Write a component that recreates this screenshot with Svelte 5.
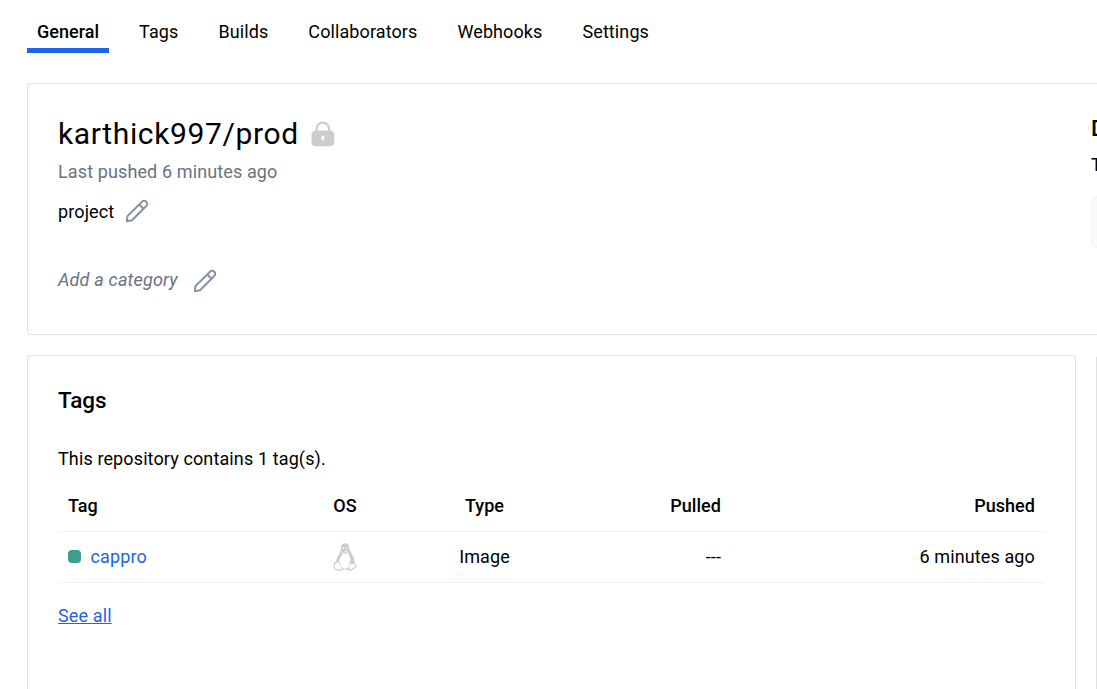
<script>
  const tabs = ['General', 'Tags', 'Builds', 'Collaborators', 'Webhooks', 'Settings'];
</script>

{#snippet pencil()}
  <svg class="pencil" viewBox="0 0 24 24" width="24" height="24" fill="none" stroke="#8993a5" stroke-width="2" stroke-linejoin="round">
    <path d="M1.800 22.200 2.500 17 17 2.700a2.900 2.900 0 0 1 4.300 0 2.900 2.900 0 0 1 0 4.300L7 21.300Z" />
    <path d="M14.200 5.500l4.300 4.300" />
  </svg>
{/snippet}

<div class="page">
  <nav>
    {#each tabs as tab, i}
      <a class="tab" class:active={i === 0}>{tab}</a>
    {/each}
  </nav>

  <section class="card summary">
    <div class="details">
      <div class="title">
        <h1>karthick997/prod</h1>
        <svg class="lock" viewBox="0 0 24 26" width="24" height="26">
          <path d="M5.500 11V8a6.300 6.300 0 0 1 12.600 0v3" fill="none" stroke="#ccc" stroke-width="2.200" />
          <path fill="#ccc" fill-rule="evenodd" d="M5 9.500h13.500Q23.200 9.500 23.200 14v6.500q0 4.800-4.500 4.800H5Q.5 25.300.5 20.500V14Q.5 9.500 5 9.500ZM11.800 14.500q-1.300 0-1.300 1.300v2.400q0 1.300 1.300 1.300t1.300-1.300v-2.400q0-1.300-1.300-1.300Z" />
        </svg>
      </div>
      <div class="last">Last pushed 6 minutes ago</div>
      <div class="desc"><span>project</span>{@render pencil()}</div>
      <div class="category"><em>Add a category</em>{@render pencil()}</div>
    </div>
    <aside>
      <h3>D</h3>
      <div>T</div>
      <div class="command"></div>
    </aside>
  </section>

  <div class="lower">
    <section class="card tags">
      <h2>Tags</h2>
      <p>This repository contains 1 tag(s).</p>
      <div class="row head">
        <span>Tag</span><span class="center">OS</span><span class="center">Type</span><span class="right">Pulled</span><span class="right">Pushed</span>
      </div>
      <div class="row">
        <span class="name"><i></i><a>cappro</a></span>
        <span class="center os">
          <svg viewBox="0 0 24 28" width="24" height="28">
            <path fill="#ccc" d="M8.100 5C8 2 9.500.300 12.200.300S16.300 2.200 16.300 5.400c0 3.600 5 6.800 5 12.600l2.200 4.400-.5 2-4.900 3.300H16l-1.500-1.100H9.700l-1.500 1.100H6l-5.200-1.400V20.300l2.500-2.300C4 12.500 8.300 9.500 8.100 5Z" />
            <path fill="#fff" d="M9.800 9.300l2.400 1.600 2.700-1.800c.600 3 2.700 5 2.700 8.400l-1.300 2.300-.3 4.300c-2.200 2.200-4.900 2.200-6.800.300L6.300 19.200c-.4-4.200 3.100-6.500 3.500-9.900Z" />
            <path fill="#fff" d="M1.800 21.200l2.700-2q.7-.2 1.200.7l3 4.500c.3 1.500-.600 2.600-2.200 2.200l-4.700-1.200ZM17.200 20.200l2 1.200 1.900-1.300 1.300 3-4.300 3.400c-1.300.3-1.900-.3-1.900-1.700Z" />
            <path fill="#fff" d="M9.900 5a.6.9 0 1 0 1.200 0 .6.9 0 1 0-1.200 0ZM13.100 5a.7 1 0 1 0 1.400 0 .7 1 0 1 0-1.400 0ZM10.200 7.600l2 .9 2.200-1.100-.1.800-2.100 1.200Z" />
          </svg>
        </span>
        <span class="center">Image</span><span class="right">---</span><span class="right">6 minutes ago</span>
      </div>
      <a class="all">See all</a>
    </section>
    <section class="card next"></section>
  </div>
</div>

<style>
  :global(body) { margin: 0; background: #fff; overflow: hidden; }
  .page { box-sizing: border-box; width: 1097px; height: 689px; overflow: hidden; padding-left: 27px; font: 18px/24px Roboto, sans-serif; letter-spacing: .12px; color: #000; }
  h1, h2, h3, p { margin: 0; }
  nav { display: flex; gap: 20px; height: 83px; letter-spacing: .1px; }
  .tab { box-sizing: border-box; height: 53px; padding: 20px 10px 0; }
  .active { font-weight: 500; letter-spacing: .02px; border-bottom: 5px solid #1d63ed; }
  .card { box-sizing: border-box; border: 1px solid #e0e0e0; border-radius: 3px; }
  .summary { display: flex; width: 1400px; height: 252px; }
  .details { width: 1033px; padding: 30px 0 0 30px; }
  .title { display: flex; gap: 12px; height: 40px; }
  h1 { font-size: 30px; font-weight: 400; line-height: 40px; letter-spacing: .63px; }
  .lock { margin-top: 7px; }
  .last { margin-top: 6px; color: #677285; }
  .desc { display: flex; gap: 11px; margin-top: 16px; }
  .category { display: flex; gap: 15px; margin-top: 44px; color: #677285; letter-spacing: .19px; }
  .category .pencil { margin-top: 1px; }
  .desc .pencil { margin-top: -1px; }
  aside { padding-top: 32px; }
  h3 { font-size: 22.500px; font-weight: 500; line-height: 24px; margin-bottom: 13px; letter-spacing: 0; }
  .command { box-sizing: border-box; width: 300px; height: 52px; margin-top: 19px; border: 1px solid #f2f2f2; border-radius: 5px; background: #f9f9f9; }
  .lower { display: flex; gap: 20px; margin-top: 20px; }
  .tags { flex: none; width: 1049px; height: 400px; padding: 30px 30px 0 30px; }
  .next { flex: none; width: 300px; height: 400px; }
  h2 { font-size: 22.500px; line-height: 28px; font-weight: 500; letter-spacing: -.05px; }
  p { margin-top: 33px; }
  .row { box-sizing: border-box; display: grid; grid-template-columns: 227px 100px 179px 147px 1fr; height: 51px; padding: 0 10px; border-bottom: 1px solid #f2f2f2; line-height: 50px; }
  .head { height: 61px; padding-top: 10px; font-weight: 500; letter-spacing: .05px; }
  .center { text-align: center; }
  .right { text-align: right; }
  .name { display: flex; align-items: center; gap: 9.500px; }
  .name i { width: 13px; height: 13px; margin-bottom: 1px; border-radius: 4px; background: #3c9f8d; }
  .name a, .all { color: #1d63ed; }
  .os { display: flex; align-items: center; justify-content: center; }
  .all { display: inline-block; margin-top: 21px; text-decoration: underline; }
</style>
